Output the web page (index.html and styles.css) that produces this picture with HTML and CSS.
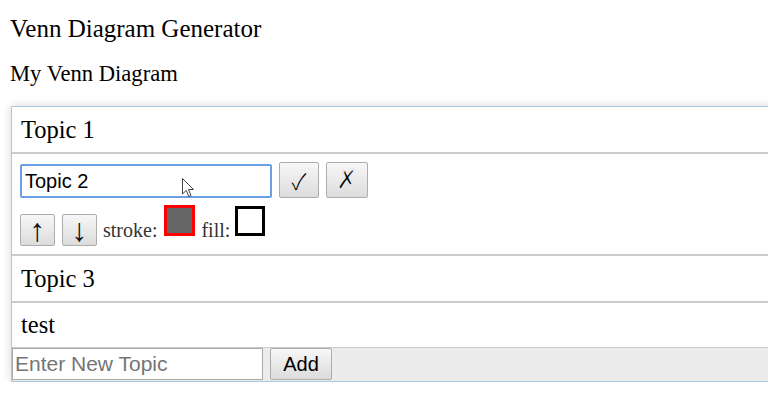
FILE: index.html
```html
<!DOCTYPE html>
<html>
<head>
<meta charset="utf-8">
<title>Venn Diagram Generator</title>
<link rel="stylesheet" href="styles.css">
</head>
<body>
<div class="page">
  <h1 class="title">Venn Diagram Generator</h1>
  <h2 class="subtitle">My Venn Diagram</h2>
  <div class="panel">
    <div class="row"><span class="topic">Topic 1</span></div>
    <div class="row row-edit">
      <div class="edit-line">
        <input class="edit-input" type="text" value="Topic 2">
        <button class="btn btn-ok">✓</button>
        <button class="btn btn-cancel">✗</button>
      </div>
      <div class="style-line">
        <button class="btn btn-arrow">↑</button>
        <button class="btn btn-arrow btn-down">↓</button>
        <span class="label label-stroke">stroke:</span>
        <span class="swatch swatch-stroke"></span>
        <span class="label label-fill">fill:</span>
        <span class="swatch swatch-fill"></span>
      </div>
      <svg class="cursor" width="13" height="20" viewBox="0 0 13 20"><path d="M0.5 0.5 L0.5 16 L4.2 12.4 L6.8 18.5 L9 17.5 L6.5 11.5 L11.5 11.5 Z" fill="#fff" stroke="#444" stroke-width="1" stroke-linejoin="round"/></svg>
    </div>
    <div class="row"><span class="topic">Topic 3</span></div>
    <div class="row row-last"><span class="topic">test</span></div>
    <div class="footer">
      <input class="new-input" type="text" placeholder="Enter New Topic">
      <button class="btn btn-add">Add</button>
    </div>
  </div>
</div>
</body>
</html>
```

FILE: styles.css
```css
html, body {
  margin: 0;
  padding: 0;
  overflow: hidden;
  background: #fff;
}

.page {
  padding: 0 0 0 10px;
  font-family: "Liberation Serif", "Times New Roman", serif;
  color: #000;
}

.title {
  margin: 14px 0 0 0;
  font-size: 25px;
  line-height: 30px;
  font-weight: normal;
}

.subtitle {
  margin: 17px 0 0 0;
  font-size: 22.6px;
  line-height: 26px;
  font-weight: normal;
}

.panel {
  margin: 19px 0 0 1px;
  width: 790px;
  border: 1px solid #a9cbe0;
  box-shadow: 0 0 9px rgba(0, 0, 0, 0.16);
  background: #fff;
}

.row {
  position: relative;
  display: flex;
  align-items: center;
  padding: 0 9px;
  border-bottom: 2px solid #cbcbcb;
  box-sizing: border-box;
  height: 47px;
}

.row-last {
  height: 45px;
  border-bottom: 1px solid #cbcbcb;
}

.topic {
  font-size: 24.5px;
  line-height: 28px;
}

.row-edit {
  display: block;
  height: 102px;
  padding: 8px 8px 0 8px;
}

.edit-line {
  display: flex;
  align-items: flex-end;
  gap: 7px;
}

.edit-input {
  box-sizing: border-box;
  width: 252px;
  height: 34px;
  margin: 0;
  padding: 0 3px;
  border: 2px solid #6b9fe8;
  border-radius: 2px;
  font-family: "Liberation Sans", Arial, sans-serif;
  font-size: 20px;
  color: #000;
  outline: none;
}

.btn {
  box-sizing: border-box;
  margin: 0;
  padding: 0;
  border: 1px solid #adadad;
  border-radius: 2px;
  background: linear-gradient(#f7f7f7, #dcdcdc);
  font-family: "Liberation Sans", Arial, sans-serif;
  font-size: 20px;
  color: #000;
}

.btn-ok {
  width: 40px;
  height: 36px;
  font-family: "Noto Sans CJK JP", "DejaVu Sans", sans-serif;
  font-weight: 300;
  font-size: 22px;
}

.btn-cancel {
  width: 42px;
  height: 36px;
  font-family: "DejaVu Sans", sans-serif;
  font-size: 27px;
  line-height: 30px;
  -webkit-text-stroke: 1.5px #e9e9e9;
}

.style-line {
  display: flex;
  align-items: flex-start;
  margin-top: 7px;
}

.btn-arrow {
  width: 35px;
  height: 32px;
  margin-top: 9px;
  font-family: "Liberation Serif", "DejaVu Serif", serif;
  font-size: 32px;
  line-height: 30px;
  color: #111;
}

.btn-down {
  margin-left: 7px;
}

.label {
  margin-top: 13px;
  font-size: 20px;
  line-height: 24px;
  color: #333;
}

.label-stroke {
  margin-left: 6px;
}

.label-fill {
  margin-left: 6px;
}

.swatch {
  box-sizing: border-box;
  display: block;
  width: 31px;
  height: 31px;
  border: 3px solid #f00;
}

.swatch-stroke {
  margin-left: 7px;
  background: #666;
}

.swatch-fill {
  margin-left: 5px;
  margin-top: 1px;
  width: 30px;
  height: 30px;
  border-color: #000;
  background: #fff;
}

.cursor {
  position: absolute;
  left: 170px;
  top: 24px;
}

.footer {
  display: flex;
  align-items: flex-start;
  gap: 7px;
  height: 33px;
  background: #ececec;
}

.new-input {
  box-sizing: border-box;
  width: 251px;
  height: 32px;
  margin: 0;
  padding: 0 2px;
  border: 1px solid #a9a9a9;
  font-family: "Liberation Sans", Arial, sans-serif;
  font-size: 21px;
  color: #000;
  background: #fff;
  outline: none;
}

.new-input::placeholder {
  color: #757575;
}

.btn-add {
  width: 62px;
  height: 32px;
}
```
